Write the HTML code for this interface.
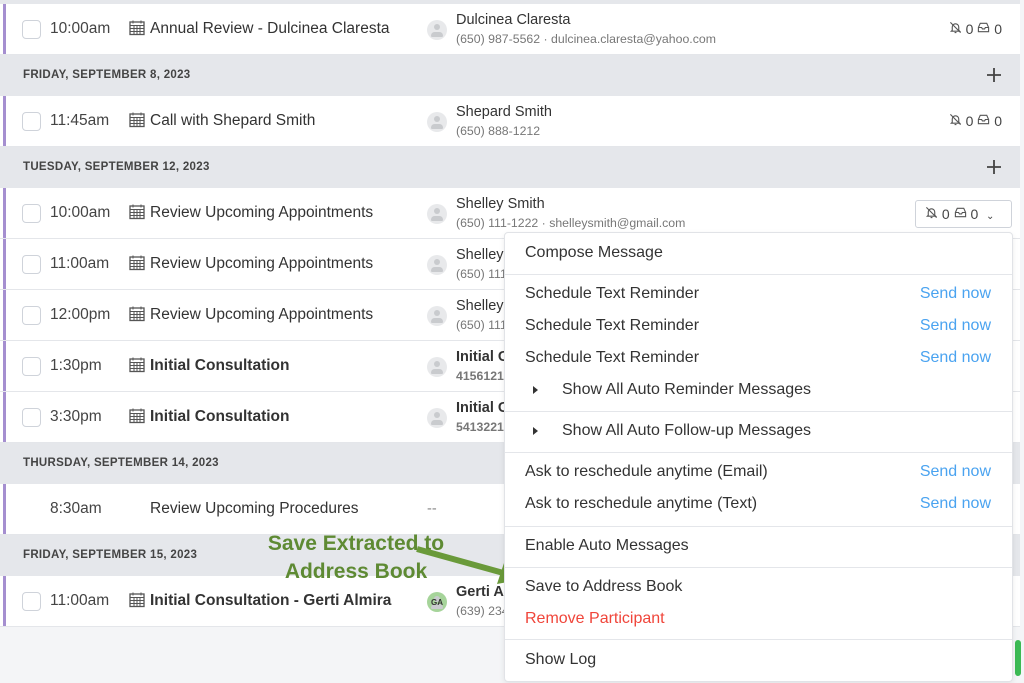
<!DOCTYPE html>
<html><head><meta charset="utf-8"><style>
*{box-sizing:border-box;margin:0;padding:0}
body{width:1024px;height:683px;overflow:hidden;background:#f4f5f7;font-family:"Liberation Sans",sans-serif;color:#333;position:relative}
.row{position:absolute;left:0;width:1020px;height:51px;background:#fff;border-bottom:1px solid #e4e6ea}
.row:before{content:"";position:absolute;left:3px;top:0;bottom:0;width:3px;background:#a58fd0}
.hdr{position:absolute;left:0;width:1020px;height:41px;background:#e5e7eb;font-size:11.5px;font-weight:bold;color:#444;letter-spacing:.3px;padding:14px 0 0 23px}
.hdr .plus{position:absolute;right:19px;top:13px}
.cb{position:absolute;left:22px;top:16px;width:19px;height:19px;border:1px solid #cfd3da;border-radius:4px;background:#fff}
.tm{position:absolute;left:50px;top:16px;font-size:15.5px;color:#444}
.cal{position:absolute;left:129px;top:15px}
.ti{position:absolute;left:150px;top:16px;font-size:15.5px;color:#333}
.av{position:absolute;left:427px;top:16px;width:20px;height:20px;border-radius:50%;background:#e8e9eb}
.av:before{content:"";position:absolute;left:7px;top:4px;width:6px;height:6px;border-radius:50%;background:#c9cbce}
.av:after{content:"";position:absolute;left:4px;top:12px;width:12px;height:5px;border-radius:5px 5px 2px 2px;background:#c9cbce}
.nm{position:absolute;left:456px;top:8px;font-size:14.5px;color:#333}
.sb{position:absolute;left:456px;top:28px;font-size:12.3px;color:#777}
.ic{position:absolute;right:18px;top:17px;font-size:14px;color:#444}
.dd{position:absolute;left:504px;top:232px;width:509px;height:450px;background:#fff;border:1px solid #e1e3e7;border-radius:4px;box-shadow:0 2px 6px rgba(0,0,0,.08)}
.it{position:absolute;left:20px;font-size:16px;color:#333}
.sn{position:absolute;right:21px;font-size:16px;color:#4aa3f0}
.sep{position:absolute;left:0;right:0;height:1px;background:#e4e6ea}
.tri{position:absolute;left:28px;width:0;height:0;border-left:5px solid #333;border-top:4px solid transparent;border-bottom:4px solid transparent}
</style></head><body>
<svg width="0" height="0" style="position:absolute"><defs>
<symbol id="c" viewBox="0 0 16 16"><rect x="1" y="2.5" width="14" height="12.5" fill="none" stroke="#555" stroke-width="1.3"/><path d="M1 6h14M4 1v3M12 1v3M5 6v9M8 6v9M11 6v9M1 9h14M1 12h14" stroke="#555" stroke-width="1"/></symbol>
<symbol id="b" viewBox="0 0 14 14"><path d="M3.5 10V6.5a3.5 3.5 0 0 1 7 0V10l1 1h-9zM6 12.5h2M1.5 1.5l11 11" fill="none" stroke="#555" stroke-width="1.2"/></symbol>
<symbol id="m" viewBox="0 0 14 14"><path d="M1.5 7l2-4.5h7l2 4.5v4.5h-11zM1.5 7h3.5l.8 1.5h2.4l.8-1.5h3.5" fill="none" stroke="#555" stroke-width="1.2"/></symbol>
<symbol id="p" viewBox="0 0 14 14"><path d="M7 0v14M0 7h14" stroke="#444" stroke-width="1.8"/></symbol>
</defs></svg>

<div style="position:absolute;left:0;top:0;width:1020px;height:4px;background:#e5e7eb"></div>
<div class="row" style="top:4px"><div class="cb"></div><div class="tm">10:00am</div><svg class="cal" width="16" height="17"><use href="#c"/></svg><div class="ti">Annual Review - Dulcinea Claresta</div><div class="av"></div><div class="nm">Dulcinea Claresta</div><div class="sb">(650) 987-5562 · dulcinea.claresta@yahoo.com</div><div class="ic"><svg width="13" height="13"><use href="#b"/></svg> 0 <svg width="13" height="13"><use href="#m"/></svg> 0</div></div>
<div class="hdr" style="top:55px">FRIDAY, SEPTEMBER 8, 2023<svg class="plus" width="14" height="14"><use href="#p"/></svg></div>
<div class="row" style="top:96px"><div class="cb"></div><div class="tm">11:45am</div><svg class="cal" width="16" height="17"><use href="#c"/></svg><div class="ti">Call with Shepard Smith</div><div class="av"></div><div class="nm">Shepard Smith</div><div class="sb">(650) 888-1212</div><div class="ic"><svg width="13" height="13"><use href="#b"/></svg> 0 <svg width="13" height="13"><use href="#m"/></svg> 0</div></div>
<div class="hdr" style="top:147px">TUESDAY, SEPTEMBER 12, 2023<svg class="plus" width="14" height="14"><use href="#p"/></svg></div>
<div class="row" style="top:188px"><div class="cb"></div><div class="tm">10:00am</div><svg class="cal" width="16" height="17"><use href="#c"/></svg><div class="ti">Review Upcoming Appointments</div><div class="av"></div><div class="nm">Shelley Smith</div><div class="sb">(650) 111-1222 · shelleysmith@gmail.com</div>
<div style="position:absolute;left:915px;top:12px;width:97px;height:28px;border:1px solid #cfd3da;border-radius:3px;font-size:14px;color:#444;padding:5px 0 0 9px"><svg width="13" height="13"><use href="#b"/></svg> 0 <svg width="13" height="13"><use href="#m"/></svg> 0 &nbsp;<span style="font-size:10px">&#8964;</span></div></div>
<div class="row" style="top:239px"><div class="cb"></div><div class="tm">11:00am</div><svg class="cal" width="16" height="17"><use href="#c"/></svg><div class="ti">Review Upcoming Appointments</div><div class="av"></div><div class="nm">Shelley Smith</div><div class="sb">(650) 111-1222</div></div>
<div class="row" style="top:290px"><div class="cb"></div><div class="tm">12:00pm</div><svg class="cal" width="16" height="17"><use href="#c"/></svg><div class="ti">Review Upcoming Appointments</div><div class="av"></div><div class="nm">Shelley Smith</div><div class="sb">(650) 111-1222</div></div>
<div class="row" style="top:341px"><div class="cb"></div><div class="tm">1:30pm</div><svg class="cal" width="16" height="17"><use href="#c"/></svg><div class="ti" style="font-weight:bold">Initial Consultation</div><div class="av"></div><div class="nm" style="font-weight:bold">Initial Consultation</div><div class="sb" style="font-weight:bold">4156121212</div></div>
<div class="row" style="top:392px"><div class="cb"></div><div class="tm">3:30pm</div><svg class="cal" width="16" height="17"><use href="#c"/></svg><div class="ti" style="font-weight:bold">Initial Consultation</div><div class="av"></div><div class="nm" style="font-weight:bold">Initial Consultation</div><div class="sb" style="font-weight:bold">5413221212</div></div>
<div class="hdr" style="top:443px">THURSDAY, SEPTEMBER 14, 2023</div>
<div class="row" style="top:484px"><div class="tm">8:30am</div><div class="ti">Review Upcoming Procedures</div><div class="nm" style="left:427px;top:17px;color:#888">--</div></div>
<div class="hdr" style="top:535px">FRIDAY, SEPTEMBER 15, 2023</div>
<div class="row" style="top:576px"><div class="cb"></div><div class="tm">11:00am</div><svg class="cal" width="16" height="17"><use href="#c"/></svg><div class="ti" style="font-weight:bold">Initial Consultation - Gerti Almira</div><div class="av" style="background:#a6d49a"></div><div style="position:absolute;left:427px;top:22px;width:20px;font-size:8px;font-weight:bold;text-align:center;color:#333">GA</div><div class="nm" style="font-weight:bold">Gerti Almira</div><div class="sb">(639) 234-1212</div></div>
<div style="position:absolute;left:1015px;top:640px;width:6px;height:36px;background:#3cba54;border-radius:3px"></div>

<div style="position:absolute;left:250px;top:530px;width:212px;text-align:center;font-size:21px;font-weight:bold;color:#5e8a33;line-height:28px">Save Extracted to<br>Address Book</div>
<svg style="position:absolute;left:415px;top:545px" width="110" height="40"><path d="M2 4L92 29" stroke="#6a9a3a" stroke-width="6"/><path d="M108 34L82 39L90 15Z" fill="#6a9a3a"/></svg>

<div class="dd">
<div class="it" style="top:11px">Compose Message</div>
<div class="sep" style="top:41px"></div>
<div class="it" style="top:52px">Schedule Text Reminder</div><div class="sn" style="top:52px">Send now</div>
<div class="it" style="top:84px">Schedule Text Reminder</div><div class="sn" style="top:84px">Send now</div>
<div class="it" style="top:116px">Schedule Text Reminder</div><div class="sn" style="top:116px">Send now</div>
<div class="tri" style="top:153px"></div><div class="it" style="left:57px;top:148px">Show All Auto Reminder Messages</div>
<div class="sep" style="top:178px"></div>
<div class="tri" style="top:194px"></div><div class="it" style="left:57px;top:189px">Show All Auto Follow-up Messages</div>
<div class="sep" style="top:219px"></div>
<div class="it" style="top:230px">Ask to reschedule anytime (Email)</div><div class="sn" style="top:230px">Send now</div>
<div class="it" style="top:262px">Ask to reschedule anytime (Text)</div><div class="sn" style="top:262px">Send now</div>
<div class="sep" style="top:293px"></div>
<div class="it" style="top:304px">Enable Auto Messages</div>
<div class="sep" style="top:334px"></div>
<div class="it" style="top:345px">Save to Address Book</div>
<div class="it" style="top:377px;color:#f0453a">Remove Participant</div>
<div class="sep" style="top:406px"></div>
<div class="it" style="top:418px">Show Log</div>
</div>
</body></html>
